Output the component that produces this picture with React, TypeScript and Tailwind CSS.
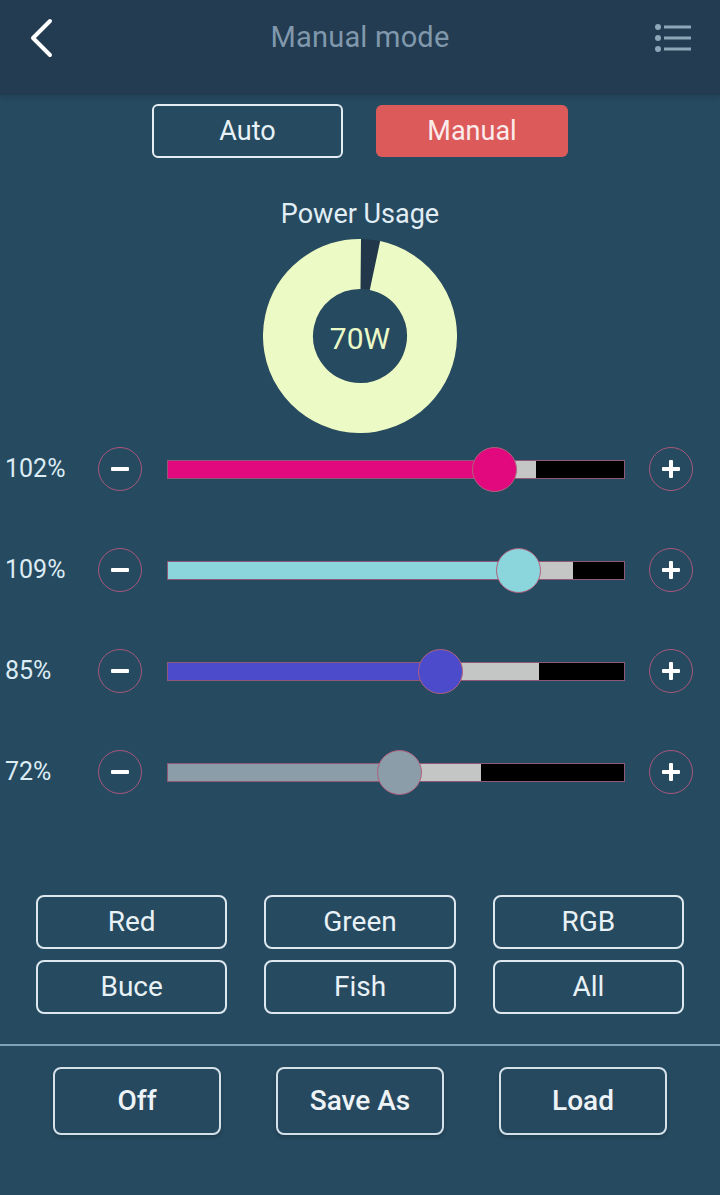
import React from "react";

type Canal = {
  label: string;
  color: string;
  thumb: number; // centro del thumb, px desde el inicio de la pista
  gris: number; // fin de la zona gris
};

const canales: Canal[] = [
  { label: "102%", color: "#e2097f", thumb: 326, gris: 368 },
  { label: "109%", color: "#8bd6dc", thumb: 350, gris: 405 },
  { label: "85%", color: "#4b4bcb", thumb: 272, gris: 371 },
  { label: "72%", color: "#8a9da8", thumb: 231, gris: 313 },
];

const presets = ["Red", "Green", "RGB", "Buce", "Fish", "All"];

function Donut() {
  const r = 72;
  const c = 2 * Math.PI * r;
  const lleno = c * (348 / 360);
  return (
    <svg width="194" height="194" viewBox="0 0 194 194">
      <circle cx="97" cy="97" r={r} fill="none" stroke="#22384a" strokeWidth="50" />
      <circle
        cx="97"
        cy="97"
        r={r}
        fill="none"
        stroke="#ecfac6"
        strokeWidth="50"
        strokeDasharray={`${lleno} ${c}`}
        transform="rotate(-78 97 97)"
      />
    </svg>
  );
}

function BotonRedondo({ tipo }: { tipo: "menos" | "mas" }) {
  return (
    <div className="relative w-[44px] h-[44px] rounded-full border-[1.5px] border-[#a9587a] flex items-center justify-center">
      <div className="w-[18px] h-[4px] bg-white rounded-[1px]" />
      {tipo === "mas" && <div className="absolute w-[4px] h-[18px] bg-white rounded-[1px]" />}
    </div>
  );
}

function FilaSlider({ canal }: { canal: Canal }) {
  return (
    <div className="flex items-center h-[44px]">
      <div className="w-[98px] pl-[5px] text-[25px] text-[#dcecf4]">{canal.label}</div>
      <BotonRedondo tipo="menos" />
      <div className="relative ml-[25px] w-[458px] h-[19px] border-[1.5px] border-[#8e5a78] bg-black">
        <div className="absolute left-0 top-0 bottom-0 bg-[#c4c6c6]" style={{ width: canal.gris }} />
        <div className="absolute left-0 top-0 bottom-0" style={{ width: canal.thumb, background: canal.color }} />
        <div
          className="absolute top-1/2 w-[45px] h-[45px] -mt-[22.5px] -ml-[22.5px] rounded-full border-[1.5px] border-[#b0607e]"
          style={{ left: canal.thumb, background: canal.color }}
        />
      </div>
      <div className="ml-[24px]">
        <BotonRedondo tipo="mas" />
      </div>
    </div>
  );
}

export default function App() {
  return (
    <div
      className="w-[720px] h-[1195px] bg-[#264a60] text-white overflow-hidden"
      style={{ fontFamily: "Roboto, 'Liberation Sans', sans-serif" }}
    >
      {/* Cabecera */}
      <div className="h-[95px] bg-[#233c51] flex items-center justify-between px-[28px] pb-[20px] shadow-[0_2px_6px_rgba(0,0,0,0.15)]">
        <div className="w-[40px] flex justify-start">
          <svg width="28" height="40" viewBox="0 0 28 40">
            <path d="M22 3 L5 20 L22 37" fill="none" stroke="#ffffff" strokeWidth="4" strokeLinecap="round" strokeLinejoin="round" />
          </svg>
        </div>
        <span className="text-[29px] text-[#8098ac] tracking-[0.2px]">Manual mode</span>
        <div className="w-[40px] flex justify-end">
          <svg width="38" height="30" viewBox="0 0 38 30">
            <circle cx="4" cy="4" r="3" fill="#8ea6b8" />
            <circle cx="4" cy="15" r="3" fill="#8ea6b8" />
            <circle cx="4" cy="26" r="3" fill="#8ea6b8" />
            <rect x="10" y="2.5" width="27" height="3" fill="#8ea6b8" />
            <rect x="10" y="13.5" width="27" height="3" fill="#8ea6b8" />
            <rect x="10" y="24.5" width="27" height="3" fill="#8ea6b8" />
          </svg>
        </div>
      </div>

      {/* Modo */}
      <div className="mt-[9px] flex justify-center gap-[33px]">
        <button className="w-[191px] h-[54px] rounded-[6px] border-2 border-[#e3edf2] text-[27px] text-[#e8f1f6]">Auto</button>
        <button className="w-[192px] h-[52px] mt-[1px] rounded-[6px] bg-[#dd5a5a] text-[27px] text-[#fbecec]">Manual</button>
      </div>

      {/* Consumo */}
      <div className="mt-[41px] flex flex-col items-center">
        <span className="text-[27px] leading-[30px] text-[#e2eef5]">Power Usage</span>
        <div className="relative mt-[10px] w-[194px] h-[194px]">
          <Donut />
          <span className="absolute inset-0 flex items-center justify-center pt-[4px] text-[30px] text-[#ecfac6]">70W</span>
        </div>
      </div>

      {/* Canales */}
      <div className="mt-[14px] flex flex-col gap-[57px]">
        {canales.map((c) => (
          <FilaSlider key={c.label} canal={c} />
        ))}
      </div>

      {/* Presets */}
      <div className="mt-[101px] px-[36px] grid grid-cols-3 gap-x-[37px] gap-y-[11px]">
        {presets.map((p) => (
          <button key={p} className="h-[54px] rounded-[8px] border-2 border-[#dce7ee] text-[28px] text-[#e8f1f6]">
            {p}
          </button>
        ))}
      </div>

      <div className="mt-[30px] h-[2px] bg-[#7ea2b8]" />

      {/* Acciones */}
      <div className="mt-[21px] flex justify-center gap-[55px]">
        {["Off", "Save As", "Load"].map((b) => (
          <button
            key={b}
            className="w-[168px] h-[68px] rounded-[8px] border-2 border-[#d5e1e9] bg-[#27495f] text-[28px] font-medium text-[#edf3f7] shadow-[0_2px_4px_rgba(0,0,0,0.2)]"
          >
            {b}
          </button>
        ))}
      </div>
    </div>
  );
}
